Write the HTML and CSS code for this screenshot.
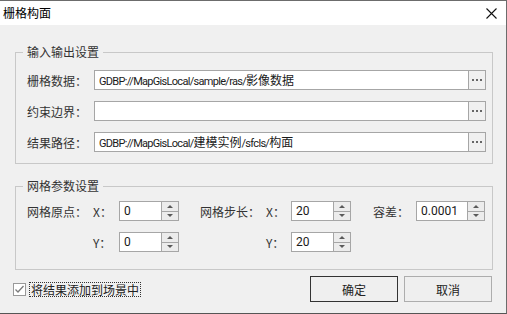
FILE: index.html
```html
<!DOCTYPE html>
<html lang="zh-CN">
  <head>
    <meta charset="UTF-8" />
    <title>栅格构面</title>
    <link rel="stylesheet" href="styles.css">
  </head>
  <body>
    <div class="window">
      <div class="titlebar">
        <span class="title">栅格构面</span>
        <svg class="close" width="11" height="11" viewBox="0 0 11 11">
          <path d="M0.5 0.5 L10.5 10.5 M10.5 0.5 L0.5 10.5" stroke="#111" stroke-width="1.1" fill="none" />
        </svg>
      </div>

      <div class="group group-io">
        <span class="group-title">输入输出设置</span>
        <div class="row">
          <span class="label">栅格数据：</span>
          <div class="path-box">
            <span class="path-text">GDBP://MapGisLocal/sample/ras/<span class="cjk">影像数据</span></span>
            <span class="browse"><i></i><i></i><i></i></span>
          </div>
        </div>
        <div class="row">
          <span class="label">约束边界：</span>
          <div class="path-box">
            <span class="path-text"></span>
            <span class="browse"><i></i><i></i><i></i></span>
          </div>
        </div>
        <div class="row">
          <span class="label">结果路径：</span>
          <div class="path-box">
            <span class="path-text">GDBP://MapGisLocal/<span class="cjk">建模实例</span>/sfcls/<span class="cjk">构面</span></span>
            <span class="browse"><i></i><i></i><i></i></span>
          </div>
        </div>
      </div>

      <div class="group group-grid">
        <span class="group-title">网格参数设置</span>
        <div class="grid">
          <span class="label c1">网格原点：</span>
          <span class="axis c2">X：</span>
          <div class="spin c3"><span class="spin-val">0</span><span class="spin-btn"><b class="up"></b><b class="down"></b></span></div>
          <span class="label c5">网格步长：</span>
          <span class="axis c6">X：</span>
          <div class="spin c7"><span class="spin-val">20</span><span class="spin-btn"><b class="up"></b><b class="down"></b></span></div>
          <span class="label c9">容差：</span>
          <div class="spin c10"><span class="spin-val">0.0001</span><span class="spin-btn"><b class="up"></b><b class="down"></b></span></div>

          <span class="axis c2">Y：</span>
          <div class="spin c3"><span class="spin-val">0</span><span class="spin-btn"><b class="up"></b><b class="down"></b></span></div>
          <span class="axis c6">Y：</span>
          <div class="spin c7"><span class="spin-val">20</span><span class="spin-btn"><b class="up"></b><b class="down"></b></span></div>
        </div>
      </div>

      <div class="footer">
        <label class="check">
          <span class="box">
            <svg width="11" height="11" viewBox="0 0 11 11">
              <path d="M1.5 5.5 L4 8 L9.5 2" stroke="#7a7a7a" stroke-width="1.3" fill="none" />
            </svg>
          </span>
          <span class="check-text">将结果添加到场景中</span>
        </label>
        <button class="btn btn-default">确定</button>
        <button class="btn">取消</button>
      </div>
    </div>
  </body>
</html>
```

FILE: styles.css
```css
body {
  margin: 0;
  font-family: "Noto Sans CJK SC", "Liberation Sans", sans-serif;
  font-size: 12px;
  color: #333;
}
.window {
  width: 507px;
  height: 314px;
  box-sizing: border-box;
  background: #f0f0f0;
  border-top: 1px solid #6c6c6c;
  border-right: 1px solid #6c6c6c;
  border-bottom: 1px solid #555;
  overflow: hidden;
}
.titlebar {
  height: 24px;
  background: #fff;
  display: flex;
  align-items: center;
  justify-content: space-between;
  padding: 0 9px 0 3px;
}
.title {
  color: #000;
  line-height: 24px;
}
.close {
  display: block;
}

/* group boxes */
.group {
  position: relative;
  margin-left: 15px;
  width: 478px;
  box-sizing: border-box;
  border: 1px solid #c8c8c8;
}
.group-title {
  position: absolute;
  top: -9px;
  left: 7px;
  padding: 0 4px;
  line-height: 16px;
  background: #f0f0f0;
  color: #333;
}
.group-io {
  margin-top: 27px;
  padding: 17px 6px 11px 11px;
  display: flex;
  flex-direction: column;
  gap: 11px;
}
.group-grid {
  margin-top: 22px;
  padding: 14px 6px 17px 11px;
}

.row {
  display: flex;
  align-items: center;
  height: 20px;
}
.label {
  width: 67px;
  flex: none;
  color: #333;
}
.path-box {
  flex: 1;
  height: 20px;
  box-sizing: border-box;
  border: 1px solid #a6a6a6;
  background: #fff;
  display: flex;
}
.path-text {
  flex: 1;
  padding-left: 4px;
  line-height: 18px;
  font-family: Roboto, "Noto Sans CJK SC", sans-serif;
  font-size: 11px;
  letter-spacing: -0.7px;
  color: #1a1a1a;
  white-space: nowrap;
}
.path-text .cjk {
  font-family: "Noto Sans CJK SC", sans-serif;
  font-size: 12px;
  letter-spacing: 0;
}
.browse {
  width: 16px;
  border-left: 1px solid #a6a6a6;
  background: #f0f0f0;
  display: flex;
  align-items: center;
  justify-content: center;
  gap: 2px;
}
.browse i {
  width: 2px;
  height: 2px;
  background: #666;
}

/* spin boxes */
.grid {
  display: grid;
  grid-template-columns: 66px 26px 60px 21px 66px 25px 60px 22px 43px 69px;
  grid-auto-rows: 20px;
  row-gap: 11px;
  align-items: center;
}
.grid .label { width: auto; }
.c1 { grid-column: 1; }
.c2 { grid-column: 2; }
.c3 { grid-column: 3; }
.c5 { grid-column: 5; }
.c6 { grid-column: 6; }
.c7 { grid-column: 7; }
.c9 { grid-column: 9; }
.c10 { grid-column: 10; }
.axis {
  color: #333;
}
.spin {
  height: 20px;
  box-sizing: border-box;
  border: 1px solid #a6a6a6;
  background: #fff;
  display: flex;
}
.spin-val {
  flex: 1;
  padding-left: 4px;
  line-height: 18px;
  font-family: Roboto, "Noto Sans CJK SC", sans-serif;
  color: #1a1a1a;
}
.spin-btn {
  width: 16px;
  border-left: 1px solid #a6a6a6;
  display: flex;
  flex-direction: column;
}
.spin-btn b {
  flex: 1;
  background: #ececec;
  display: flex;
  align-items: center;
  justify-content: center;
}
.spin-btn .up {
  border-bottom: 1px solid #a6a6a6;
}
.spin-btn .up::after,
.spin-btn .down::after {
  content: "";
  border-left: 3px solid transparent;
  border-right: 3px solid transparent;
}
.spin-btn .up::after {
  border-bottom: 3px solid #5a5a5a;
}
.spin-btn .down::after {
  border-top: 3px solid #5a5a5a;
}

/* footer */
.footer {
  display: flex;
  align-items: center;
  margin-top: 6px;
  padding: 0 14px 0 13px;
  height: 26px;
}
.check {
  display: flex;
  align-items: center;
  gap: 3px;
}
.box {
  width: 13px;
  height: 13px;
  box-sizing: border-box;
  border: 1px solid #999;
  background: #fff;
  display: flex;
  align-items: center;
  justify-content: center;
}
.box svg {
  display: block;
}
.check-text {
  border: 1px dotted #333;
  padding: 0 1px;
  line-height: 13px;
  color: #222;
}
.btn {
  width: 88px;
  height: 26px;
  margin-left: 6px;
  border: 1px solid #adadad;
  background: #efefef;
  font-family: inherit;
  font-size: 12px;
  color: #222;
  padding: 0;
}
.btn-default {
  margin-left: auto;
  border-color: #333;
}
```
